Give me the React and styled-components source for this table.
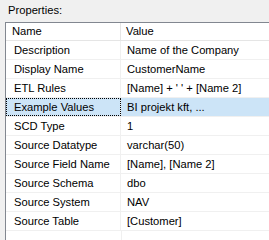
import React from "react";
import styled, { createGlobalStyle } from "styled-components";

const rows = [
  ["Description", "Name of the Company"],
  ["Display Name", "CustomerName"],
  ["ETL Rules", "[Name] + ' ' + [Name 2]"],
  ["Example Values", "BI projekt kft, ..."],
  ["SCD Type", "1"],
  ["Source Datatype", "varchar(50)"],
  ["Source Field Name", "[Name], [Name 2]"],
  ["Source Schema", "dbo"],
  ["Source System", "NAV"],
  ["Source Table", "[Customer]"],
];

function App() {
  return (
    <>
      <GlobalStyle />
      <Page>
        <Caption>Properties:</Caption>
        <Grid>
          <HeaderRow>
            <HeaderCell first>Name</HeaderCell>
            <HeaderCell>Value</HeaderCell>
          </HeaderRow>
          {rows.map(([name, value]) => (
            <Row key={name} selected={name === "Example Values"}>
              <Cell first focused={name === "Example Values"}>
                {name}
              </Cell>
              <Cell>{value}</Cell>
            </Row>
          ))}
          <Filler>
            <FillerCol />
          </Filler>
        </Grid>
      </Page>
    </>
  );
}

export default App;

const GlobalStyle = createGlobalStyle`
  body {
    margin: 0;
    background: #f0f0f0;
    font-family: "Liberation Sans", Arial, sans-serif;
    font-size: 11.2px;
    color: #000;
  }
`;

const Page = styled.div`
  width: 269px;
  height: 240px;
  overflow: hidden;
  display: flex;
  flex-direction: column;
`;

const Caption = styled.div`
  height: 22px;
  padding-left: 8px;
  line-height: 20px;
`;

const Grid = styled.div`
  flex: 1;
  margin-left: 5px;
  width: 300px;
  border-left: 1px solid #828790;
  border-top: 1px solid #828790;
  background: #fff;
  display: flex;
  flex-direction: column;
`;

const HeaderRow = styled.div`
  display: grid;
  grid-template-columns: 115px 1fr;
  height: 17px;
  border-bottom: 1px solid #e5e5e5;
`;

const HeaderCell = styled.div`
  padding-left: ${(p) => (p.first ? "6px" : "5px")};
  line-height: 17px;
  border-right: ${(p) => (p.first ? "1px solid #e5e5e5" : "none")};
`;

const Row = styled.div`
  display: grid;
  grid-template-columns: 115px 1fr;
  height: 18px;
  border-bottom: 1px solid #f0f0f0;
  background: ${(p) => (p.selected ? "#cce4f7" : "#fff")};
`;

const Cell = styled.div`
  padding-left: ${(p) => (p.first ? "8px" : "6px")};
  line-height: 18px;
  white-space: nowrap;
  border-right: ${(p) => (p.first ? "1px solid #f0f0f0" : "none")};
  outline: ${(p) => (p.focused ? "1px dotted #000" : "none")};
  outline-offset: -1px;
`;

const Filler = styled.div`
  flex: 1;
  display: flex;
`;

const FillerCol = styled.div`
  width: 115px;
  border-right: 1px solid #f0f0f0;
`;
